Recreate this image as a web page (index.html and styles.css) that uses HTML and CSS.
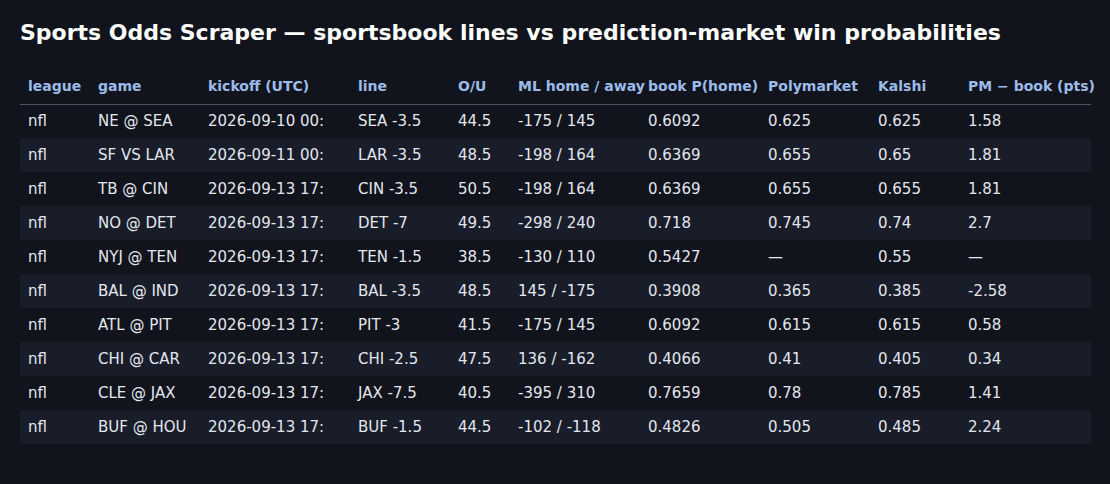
FILE: index.html
```html
<!DOCTYPE html>
<html>
<head>
<meta charset="utf-8">
<link rel="stylesheet" href="styles.css">
</head>
<body>
<h1 class="title">Sports Odds Scraper — sportsbook lines vs prediction-market win probabilities</h1>
<table class="odds">
<colgroup>
<col class="c-league"><col class="c-game"><col class="c-kick"><col class="c-line"><col class="c-ou"><col class="c-ml"><col class="c-book"><col class="c-poly"><col class="c-kal"><col class="c-diff">
</colgroup>
<thead>
<tr><th>league</th><th>game</th><th>kickoff (UTC)</th><th>line</th><th>O/U</th><th>ML home / away</th><th>book P(home)</th><th>Polymarket</th><th>Kalshi</th><th>PM − book (pts)</th></tr>
</thead>
<tbody>
<tr><td>nfl</td><td>NE @ SEA</td><td>2026-09-10 00:</td><td>SEA -3.5</td><td>44.5</td><td>-175 / 145</td><td>0.6092</td><td>0.625</td><td>0.625</td><td>1.58</td></tr>
<tr><td>nfl</td><td>SF VS LAR</td><td>2026-09-11 00:</td><td>LAR -3.5</td><td>48.5</td><td>-198 / 164</td><td>0.6369</td><td>0.655</td><td>0.65</td><td>1.81</td></tr>
<tr><td>nfl</td><td>TB @ CIN</td><td>2026-09-13 17:</td><td>CIN -3.5</td><td>50.5</td><td>-198 / 164</td><td>0.6369</td><td>0.655</td><td>0.655</td><td>1.81</td></tr>
<tr><td>nfl</td><td>NO @ DET</td><td>2026-09-13 17:</td><td>DET -7</td><td>49.5</td><td>-298 / 240</td><td>0.718</td><td>0.745</td><td>0.74</td><td>2.7</td></tr>
<tr><td>nfl</td><td>NYJ @ TEN</td><td>2026-09-13 17:</td><td>TEN -1.5</td><td>38.5</td><td>-130 / 110</td><td>0.5427</td><td>—</td><td>0.55</td><td>—</td></tr>
<tr><td>nfl</td><td>BAL @ IND</td><td>2026-09-13 17:</td><td>BAL -3.5</td><td>48.5</td><td>145 / -175</td><td>0.3908</td><td>0.365</td><td>0.385</td><td>-2.58</td></tr>
<tr><td>nfl</td><td>ATL @ PIT</td><td>2026-09-13 17:</td><td>PIT -3</td><td>41.5</td><td>-175 / 145</td><td>0.6092</td><td>0.615</td><td>0.615</td><td>0.58</td></tr>
<tr><td>nfl</td><td>CHI @ CAR</td><td>2026-09-13 17:</td><td>CHI -2.5</td><td>47.5</td><td>136 / -162</td><td>0.4066</td><td>0.41</td><td>0.405</td><td>0.34</td></tr>
<tr><td>nfl</td><td>CLE @ JAX</td><td>2026-09-13 17:</td><td>JAX -7.5</td><td>40.5</td><td>-395 / 310</td><td>0.7659</td><td>0.78</td><td>0.785</td><td>1.41</td></tr>
<tr><td>nfl</td><td>BUF @ HOU</td><td>2026-09-13 17:</td><td>BUF -1.5</td><td>44.5</td><td>-102 / -118</td><td>0.4826</td><td>0.505</td><td>0.485</td><td>2.24</td></tr>
</tbody>
</table>
</body>
</html>
```

FILE: styles.css
```css
html, body {
  margin: 0;
  background: #11141c;
}
body {
  padding: 20px;
  font-family: "DejaVu Sans", sans-serif;
  color: #e2e6ee;
}
.title {
  margin: 0 0 24px 0;
  font-size: 22px;
  line-height: 25px;
  font-weight: bold;
  color: #ffffff;
}
.odds {
  width: 1071px;
  border-collapse: collapse;
  table-layout: fixed;
  font-size: 15px;
}
.c-league { width: 70px; }
.c-game { width: 110px; }
.c-kick { width: 150px; }
.c-line { width: 100px; }
.c-ou { width: 60px; }
.c-ml { width: 130px; }
.c-book { width: 120px; }
.c-poly { width: 110px; }
.c-kal { width: 90px; }
.c-diff { width: 131px; }
.odds th {
  text-align: left;
  font-size: 14px;
  font-weight: bold;
  color: #9dbbea;
  height: 35px;
  padding: 0 8px;
  border-bottom: 1px solid #4b5263;
  white-space: nowrap;
  box-sizing: border-box;
}
.odds td {
  height: 34px;
  padding: 0 8px;
  white-space: nowrap;
  overflow: hidden;
  box-sizing: border-box;
}
.odds tbody tr:nth-child(even) {
  background: #191d29;
}
```
